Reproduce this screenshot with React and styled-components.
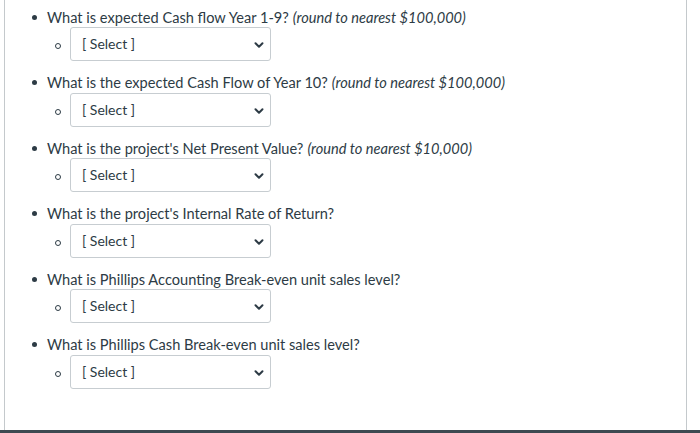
import React from 'react';
import styled, { createGlobalStyle } from 'styled-components';

const Global = createGlobalStyle`
  html, body { margin: 0; padding: 0; background: #fff; }
  body { font-family: Lato, "Open Sans", "Liberation Sans", sans-serif; color: #2d3b45; }
`;

const Page = styled.div`
  width: 700px;
  height: 433px;
  display: flex;
  flex-direction: column;
  overflow: hidden;
`;

const Panel = styled.div`
  flex: 1;
  margin-left: 4px;
  width: 681px;
  border-left: 1px solid #c4c9cc;
  border-right: 1px solid #c4c9cc;
  padding-top: 7px;
`;

const Footer = styled.div`
  height: 3px;
  background: #3d4a51;
`;

const List = styled.div`
  display: flex;
  flex-direction: column;
`;

const Item = styled.div`
  height: 65.6px;
`;

const Question = styled.div`
  display: flex;
  align-items: center;
  height: 20px;
  font-size: 14.6px;
  padding-left: 27px;
`;

const Dot = styled.span`
  width: 5px;
  height: 5px;
  border-radius: 50%;
  background: #2d3b45;
  margin-right: 10px;
  flex: none;
`;

const Hint = styled.i`
  margin-left: 4px;
`;

const Answer = styled.div`
  display: flex;
  align-items: center;
  padding-left: 50px;
`;

const Ring = styled.span`
  width: 4px;
  height: 4px;
  border-radius: 50%;
  border: 1px solid #2d3b45;
  margin-right: 9px;
  margin-top: 4px;
  flex: none;
`;

const Select = styled.div`
  box-sizing: border-box;
  width: 201px;
  height: 34px;
  border: 1px solid #c7cdd1;
  border-radius: 3px;
  display: flex;
  align-items: center;
  justify-content: space-between;
  padding: 0 5px 1px 11px;
  font-size: 14px;
  color: #2d3b45;
  background: #fff;
`;

const Chevron = () => (
  <svg width="12" height="12" viewBox="0 0 12 12" style={{ marginTop: 3 }}>
    <path d="M2.5 4.2 L6 7.7 L9.5 4.2" fill="none" stroke="#2d3b45" strokeWidth="2" strokeLinecap="round" strokeLinejoin="round" />
  </svg>
);

const questions = [
  { text: 'What is expected Cash flow Year 1-9?', hint: '(round to nearest $100,000)' },
  { text: 'What is the expected Cash Flow of Year 10?', hint: '(round to nearest $100,000)' },
  { text: "What is the project's Net Present Value?", hint: '(round to nearest $10,000)' },
  { text: "What is the project's Internal Rate of Return?" },
  { text: 'What is Phillips Accounting Break-even unit sales level?' },
  { text: 'What is Phillips Cash Break-even unit sales level?' },
];

export default function App() {
  return (
    <Page>
      <Global />
      <Panel>
        <List>
          {questions.map((q, i) => (
            <Item key={i}>
              <Question>
                <Dot />
                <span>{q.text}</span>
                {q.hint && <Hint>{q.hint}</Hint>}
              </Question>
              <Answer>
                <Ring />
                <Select>
                  <span>[ Select ]</span>
                  <Chevron />
                </Select>
              </Answer>
            </Item>
          ))}
        </List>
      </Panel>
      <Footer />
    </Page>
  );
}
